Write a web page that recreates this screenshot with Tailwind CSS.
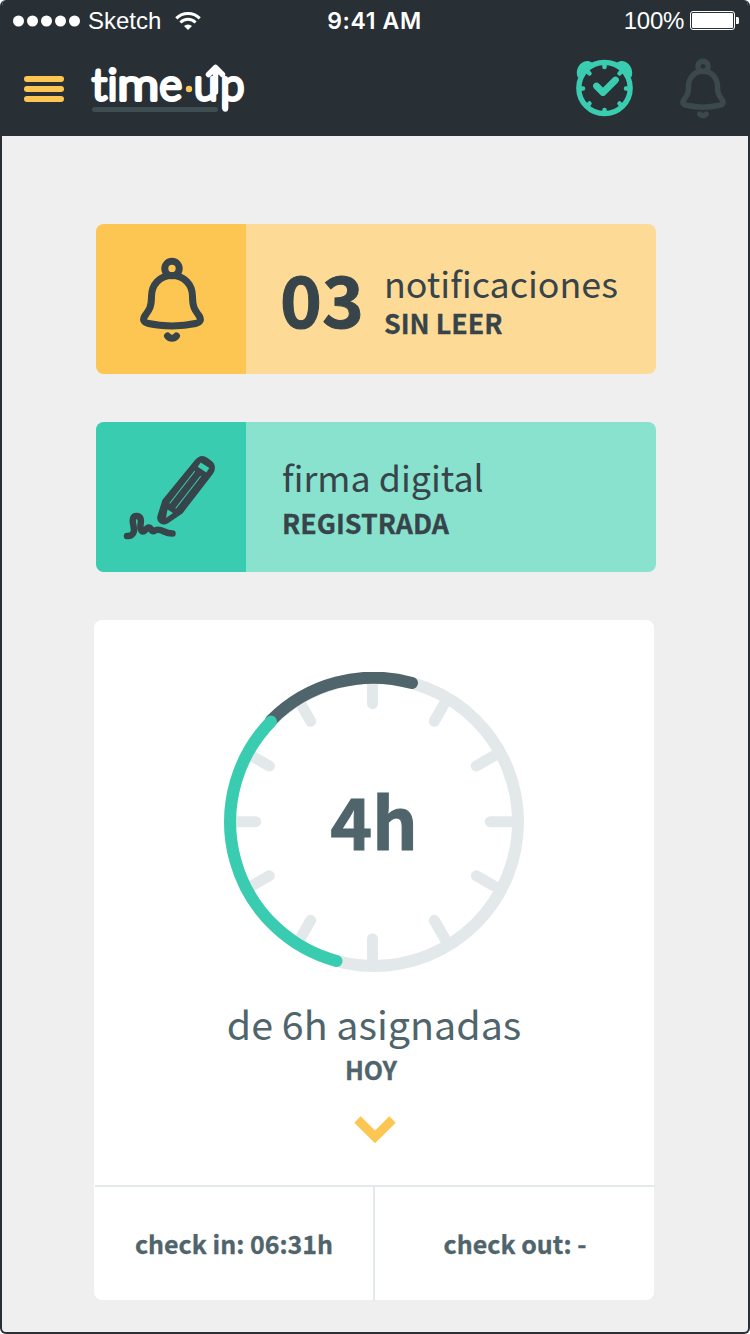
<!DOCTYPE html>
<html lang="es">

<head>
    <meta charset="UTF-8">
    <meta name="viewport" content="width=device-width, initial-scale=1.0">
    <title>time·up</title>
    <script src="https://cdn.jsdelivr.net/npm/@tailwindcss/browser@4"></script>
</head>

<body class="bg-white font-['Noto_Sans_CJK_JP','Open_Sans',sans-serif]">
    <!-- device frame -->
    <div class="w-[750px] h-[1334px] overflow-hidden rounded-md border-2 border-t-0 border-[#283036] bg-[#efefef]">

        <header class="h-[136px] bg-[#283036]">
            <!-- status bar -->
            <div class="h-10 pl-[11px] pr-[9px] grid grid-cols-3 items-center text-white font-['Liberation_Sans',sans-serif] text-2xl leading-10">
                <div class="flex items-center">
                    <svg class="w-[67px] h-3" viewBox="0 0 67 12" fill="#fff">
                        <circle cx="5.5" cy="6" r="5.5" />
                        <circle cx="19.5" cy="6" r="5.5" />
                        <circle cx="33.5" cy="6" r="5.5" />
                        <circle cx="47.5" cy="6" r="5.5" />
                        <circle cx="61.5" cy="6" r="5.5" />
                    </svg>
                    <span class="ml-2 mt-px">Sketch</span>
                    <svg class="ml-[14px] w-[26px] h-[18px]" viewBox="0 0 26 18" fill="none" stroke="#fff" stroke-width="3">
                        <path d="M1.3 6.4a16.6 16.6 0 0 1 23.4 0" />
                        <path d="M5.4 10.5a10.8 10.8 0 0 1 15.2 0" />
                        <path d="M13 18 9 14a5.8 5.8 0 0 1 8 0Z" fill="#fff" stroke="none" />
                    </svg>
                </div>
                <span class="-ml-[3px] mt-px text-center font-['Inter',sans-serif] font-semibold text-[23px] tracking-[0.65px]">9:41 AM</span>
                <div class="flex items-center justify-end">
                    <span class="mt-px tracking-[-0.3px]">100%</span>
                    <svg class="ml-[6px] w-[49px] h-[19px]" viewBox="0 0 49 19">
                        <rect x=".5" y=".5" width="44" height="18" rx="2.5" fill="none" stroke="#fff" />
                        <rect x="2" y="2" width="41" height="15" rx="1" fill="#fff" />
                        <path d="M46 6h1.5a1.5 1.5 0 0 1 1.5 1.5v4a1.5 1.5 0 0 1-1.5 1.5H46z" fill="#fff" />
                    </svg>
                </div>
            </div>

            <!-- navigation -->
            <nav class="h-24 pl-[22px] pr-[21px] flex items-center">
                <button class="flex flex-col gap-1 mt-[2px]" aria-label="Menú">
                    <span class="w-10 h-1.5 rounded-full bg-[#fdc652]"></span>
                    <span class="w-10 h-1.5 rounded-full bg-[#fdc652]"></span>
                    <span class="w-10 h-1.5 rounded-full bg-[#fdc652]"></span>
                </button>

                <!-- logo -->
                <svg class="ml-7 mt-[2px] w-[156px] h-[52px] overflow-visible" viewBox="92 63 156 52">
                    <rect x="92" y="107" width="126" height="5" rx="2.5" fill="#3d4d52" />
                    <g class="font-['Lato',sans-serif] font-light" font-size="43" fill="#fff" stroke="#fff" stroke-width="4" stroke-linejoin="round">
                        <text y="99.500" x="92 107.800">ti</text>
                        <text y="99.500" x="117.500" textLength="41.500" lengthAdjust="spacingAndGlyphs">m</text>
                        <text y="99.500" x="159.500">e</text>
                        <text y="99.500" x="194">u</text>
                        <text y="99.500" x="220.500">p</text>
                    </g>
                    <circle cx="189" cy="89" r="3.2" fill="#fdc652" />
                    <path d="M208.500 74.500l7-7 7 7M215.500 68v24M225.300 100v9" fill="none" stroke="#fff" stroke-width="5.500" stroke-linecap="round" stroke-linejoin="round" />
                </svg>

                <!-- alarm clock -->
                <svg class="ml-auto w-[58px] h-[60px]" viewBox="575 58 58 60" fill="none" stroke="#3accb0" stroke-linecap="round" stroke-linejoin="round">
                    <path d="M577.500 77c-3-9 4-17 11-16l6 2.500-13 13zM631.500 77c3-9-4-17-11-16l-6 2.500 13 13z" fill="#3accb0" stroke="none" />
                    <circle cx="604.500" cy="88" r="25.700" stroke-width="5.300" />
                    <path d="M604.500 64v3M604.500 110v3M580 88.500h3M626 88.500h3M587.500 71.500l2 2M619.500 103.500l2 2M621.500 71.500l-2 2M589.500 103.500l-2 2" stroke-width="4.500" />
                    <path d="M596.500 86l6.500 6.500 12.500-12.500" stroke-width="6.800" />
                </svg>

                <!-- muted bell -->
                <svg class="ml-[46px] mt-px w-[48px] h-[62px]" viewBox="138 257 68 87" fill="none" stroke="#3b484c" stroke-width="7.800" stroke-linecap="round" stroke-linejoin="round">
                    <circle cx="172" cy="268.500" r="7.200" />
                    <path d="M172 275.500c-12 0-20.500 9-20.500 21 0 10-2 13-6 18.500-3.500 4.500-2 7.500 3 8.500 14 3.200 33 3.200 47 0 5-1 6.500-4 3-8.500-4-5.500-6-8.500-6-18.500 0-12-8.500-21-20.500-21z" />
                    <path d="M167.500 336c2.500 3 6.500 3 9 0" />
                </svg>
            </nav>
        </header>

        <main class="pt-[88px] pl-[94px]">
            <!-- notifications -->
            <section class="w-[560px] h-[150px] flex rounded-lg overflow-hidden bg-[#fddb96] text-[#37444a]">
                <div class="w-[150px] flex items-center justify-center bg-[#fdc652]">
                    <svg class="w-[68px] h-[87px] ml-[2px] mt-[3px]" viewBox="138 257 68 87" fill="none" stroke="#37444a" stroke-width="7" stroke-linecap="round" stroke-linejoin="round">
                        <circle cx="172" cy="268.500" r="7.200" />
                        <path d="M172 275.500c-12 0-20.500 9-20.500 21 0 10-2 13-6 18.500-3.500 4.500-2 7.500 3 8.500 14 3.200 33 3.200 47 0 5-1 6.500-4 3-8.500-4-5.500-6-8.500-6-18.500 0-12-8.500-21-20.500-21z" />
                        <path d="M167.500 336c2.500 3 6.500 3 9 0" />
                    </svg>
                </div>
                <p class="ml-[34px] mt-[33px] w-[104px] text-[71px] leading-[80px] font-bold [-webkit-text-stroke:1px]">03</p>
                <div class="pt-[38px]">
                    <p class="text-[35.800px] leading-[40px]">notificaciones</p>
                    <p class="mt-px text-[26.800px] leading-[40px] font-bold [-webkit-text-stroke:0.3px]">SIN LEER</p>
                </div>
            </section>

            <!-- digital signature -->
            <section class="mt-12 w-[560px] h-[150px] flex rounded-lg overflow-hidden bg-[#89e2ce] text-[#37444a]">
                <div class="w-[150px] flex items-center justify-center bg-[#3accb0]">
                    <svg class="w-[100px] h-[96px]" viewBox="121 449 100 96" fill="none" stroke="#37444a" stroke-linecap="round" stroke-linejoin="round">
                        <!-- pencil -->
                        <path d="M198 462c2.500-3 5-3 7.500-1.200l4 3c2.500 2 2.500 5 .500 8l-30 39-14 9.500c-3 1.500-6-.500-5.200-3.500l4.700-15z" fill="#37444a" stroke-width="7" />
                        <path d="M200.700 462.500l8.600 5.500-3 4.500-8.600-5.700z" fill="#3accb0" stroke="none" />
                        <path d="M194.500 471.500l-24.500 31.500M200.500 476.500l-24.500 31.500" stroke="#3accb0" stroke-width="1.100" />
                        <path d="M167.500 509.500l5.500 3.500-7 5z" fill="#3accb0" stroke="none" />
                        <!-- signature -->
                        <path d="M127 536c6 .500 8-4 6.500-10-1.500-6-1-10 3-10 4.500 0 5 4 4 9-.500 6 2 8 5 5 2-3 4-3.500 5.500-1 1 3 3 2.500 5 1 3-1 5 0 8 1.500 3 1.500 5 2 8.500 2" stroke-width="6.500" />
                    </svg>
                </div>
                <div class="ml-9 pt-[34px]">
                    <p class="text-[35.800px] leading-[40px]">firma digital</p>
                    <p class="mt-[7px] text-[26.800px] leading-[40px] font-bold [-webkit-text-stroke:0.3px]">REGISTRADA</p>
                </div>
            </section>

            <!-- hours of the day -->
            <section class="relative -ml-[2px] mt-12 w-[560px] h-[680px] flex flex-col items-center rounded-lg bg-white text-[#4f646b]">
                <div class="mt-[52px] w-[300px] h-[300px] grid place-items-center">
                    <svg class="col-start-1 row-start-1 w-[300px] h-[300px]" viewBox="0 0 300 300" fill="none" stroke-linecap="round">
                        <circle cx="150" cy="150" r="144" stroke="#e3e9eb" stroke-width="12" />
                        <g stroke="#e3e9eb" stroke-width="11">
                            <path d="M148.500 12v19.700M148.500 288v-21.300M12 149.700h19.700M288 149.700h-21.700" />
                            <path d="M76 30.500l10.700 18.800M28 84l17.300 10M28 213.700l17.300-10M76 267l10.700-18.700" />
                            <path d="M221 30.500l-10.700 18.800M269.600 84l-17.300 10M269.600 213.700l-17.300-10M221 267l-10.700-18.700" />
                        </g>
                        <path d="M47 48.500A144 144 0 0 1 188 11" stroke="#4f646b" stroke-width="12" />
                        <path d="M112.500 289A144 144 0 0 1 47 49.500" stroke="#3accb0" stroke-width="12" />
                    </svg>
                    <p class="col-start-1 row-start-1 -mt-[7px] text-[71px] leading-[80px] font-bold [-webkit-text-stroke:1px]">4h</p>
                </div>
                <p class="mt-[29px] text-[39.400px] leading-[44px]">de 6h asignadas</p>
                <p class="mt-[6px] mr-[6px] text-[25px] leading-[36px] font-bold [-webkit-text-stroke:0.3px]">HOY</p>
                <svg class="mt-[29px] ml-[2px] w-[42px] h-[28px]" viewBox="0 0 42 28" fill="none" stroke="#fdc652" stroke-width="9">
                    <path d="M3.500 3.500 21 21 38.500 3.500" />
                </svg>
                <div class="absolute -bottom-px left-px h-[116px] w-full grid grid-cols-2 border-t-2 border-[#e3e9eb] text-center text-[25px] leading-[113px] font-bold [-webkit-text-stroke:0.3px]">
                    <p class="border-r-2 border-[#e3e9eb]">check in: 06:31h</p>
                    <p>check out: -</p>
                </div>
            </section>
        </main>
    </div>
</body>

</html>
